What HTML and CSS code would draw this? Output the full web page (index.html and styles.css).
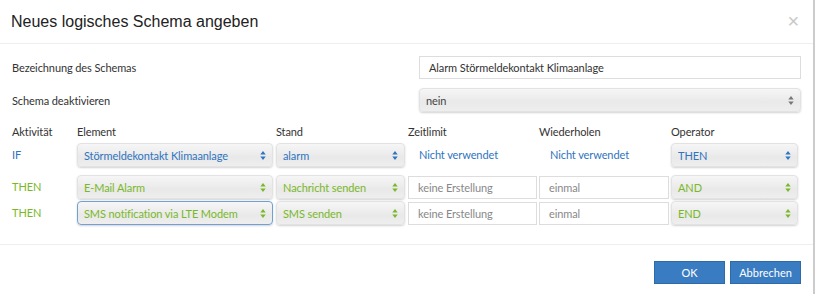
FILE: index.html
```html
<!DOCTYPE html>
<html lang="de">
<head>
    <meta charset="UTF-8">
    <title>Neues logisches Schema angeben</title>
    <link rel="stylesheet" href="styles.css">
</head>
<body>
    <div class="modal">
        <div class="modal-header">
            <h1>Neues logisches Schema angeben</h1>
            <span class="close">&times;</span>
        </div>

        <div class="modal-body">
            <div class="form-row">
                <label>Bezeichnung des Schemas</label>
                <div class="input wide">Alarm Störmeldekontakt Klimaanlage</div>
            </div>
            <div class="form-row">
                <label>Schema deaktivieren</label>
                <div class="select wide grey">nein<svg class="arrows" viewBox="0 0 6 10"><path d="M3 0L6 4H0z M3 10L0 6H6z"/></svg></div>
            </div>

            <div class="rules">
                <div class="head">Aktivität</div>
                <div class="head">Element</div>
                <div class="head">Stand</div>
                <div class="head">Zeitlimit</div>
                <div class="head">Wiederholen</div>
                <div class="head">Operator</div>

                <div class="act blue">IF</div>
                <div class="select blue">Störmeldekontakt Klimaanlage<svg class="arrows" viewBox="0 0 6 10"><path d="M3 0L6 4H0z M3 10L0 6H6z"/></svg></div>
                <div class="select blue">alarm<svg class="arrows" viewBox="0 0 6 10"><path d="M3 0L6 4H0z M3 10L0 6H6z"/></svg></div>
                <div class="plain blue">Nicht verwendet</div>
                <div class="plain blue">Nicht verwendet</div>
                <div class="select blue">THEN<svg class="arrows" viewBox="0 0 6 10"><path d="M3 0L6 4H0z M3 10L0 6H6z"/></svg></div>

                <div class="act green first">THEN</div>
                <div class="select green first">E-Mail Alarm<svg class="arrows" viewBox="0 0 6 10"><path d="M3 0L6 4H0z M3 10L0 6H6z"/></svg></div>
                <div class="select green first">Nachricht senden<svg class="arrows" viewBox="0 0 6 10"><path d="M3 0L6 4H0z M3 10L0 6H6z"/></svg></div>
                <div class="input first">keine Erstellung</div>
                <div class="input first">einmal</div>
                <div class="select green first">AND<svg class="arrows" viewBox="0 0 6 10"><path d="M3 0L6 4H0z M3 10L0 6H6z"/></svg></div>

                <div class="act green">THEN</div>
                <div class="select green focus">SMS notification via LTE Modem<svg class="arrows" viewBox="0 0 6 10"><path d="M3 0L6 4H0z M3 10L0 6H6z"/></svg></div>
                <div class="select green">SMS senden<svg class="arrows" viewBox="0 0 6 10"><path d="M3 0L6 4H0z M3 10L0 6H6z"/></svg></div>
                <div class="input">keine Erstellung</div>
                <div class="input">einmal</div>
                <div class="select green">END<svg class="arrows" viewBox="0 0 6 10"><path d="M3 0L6 4H0z M3 10L0 6H6z"/></svg></div>
            </div>
        </div>

        <div class="modal-footer">
            <button>OK</button>
            <button>Abbrechen</button>
        </div>
    </div>
</body>
</html>
```

FILE: styles.css
```css
body {
    margin: 0;
    background-color: #fff;
    font-family: Lato, "Open Sans", sans-serif;
    font-size: 11px;
    letter-spacing: -0.1px;
    color: #333;
}
.modal {
    width: 813px;
    height: 294px;
    border-right: 2px solid #ccc;
    background: #fff;
}
.modal-header {
    display: flex;
    justify-content: space-between;
    align-items: center;
    height: 43px;
    padding: 0 14px 0 11px;
    border-bottom: 1px solid #eee;
}
h1 {
    margin: 0;
    font-family: "Liberation Sans", Arial, sans-serif;
    font-size: 16px;
    font-weight: normal;
    letter-spacing: 0;
    color: #222;
}
.close {
    font-family: "Liberation Sans", Arial, sans-serif;
    font-size: 20px;
    color: #c8c8c8;
}
.modal-body {
    padding: 12px 12px 0 11px;
    height: 188px;
    border-bottom: 1px solid #eee;
}
.form-row {
    display: flex;
    justify-content: space-between;
    align-items: center;
    margin-bottom: 9px;
}
.form-row label {
    padding-left: 1px;
}
.wide {
    width: 382px;
}
.input {
    box-sizing: border-box;
    height: 23px;
    padding: 0 9px;
    display: flex;
    align-items: center;
    border: 1px solid #ddd;
    background: #fff;
    color: #888;
    white-space: nowrap;
}
.form-row .input {
    color: #333;
}
.select {
    box-sizing: border-box;
    height: 24px;
    padding: 0 6px;
    display: flex;
    align-items: center;
    justify-content: space-between;
    border: 1px solid #e2e2e2;
    border-radius: 4px;
    background: linear-gradient(#f6f6f6, #e9e9e9 60%, #eeeeee);
    box-shadow: 0 1px 2px rgba(0, 0, 0, 0.18);
    white-space: nowrap;
}
.arrows {
    width: 6px;
    height: 9px;
    flex: none;
    fill: currentColor;
}
.grey {
    color: #444;
}
.grey .arrows {
    fill: #777;
}
.blue {
    color: #2f74c0;
}
.green {
    color: #7ab829;
}
.focus {
    border-color: #6fa0d6;
}
.rules {
    display: grid;
    grid-template-columns: 66px 199px 132px 131px 132px 130px;
    align-items: center;
    margin-top: 6px;
}
.head {
    height: 22px;
    line-height: 22px;
}
.rules .select {
    margin-right: 3px;
}
.rules .input {
    margin-right: 2px;
}
.rules > div:nth-child(6n+1) {
    padding-left: 1px;
}
.plain {
    padding-left: 11px;
    height: 24px;
    line-height: 24px;
    white-space: nowrap;
}
.act {
    height: 24px;
    line-height: 24px;
}
.rules .first {
    margin-top: 8px;
    margin-bottom: 2px;
}
.modal-footer {
    display: flex;
    justify-content: flex-end;
    gap: 5px;
    padding: 16px 12px 0 0;
}
button {
    width: 71px;
    height: 23px;
    padding: 0;
    border: 1px solid #2f6aa8;
    background-color: #3a7cc2;
    color: #fff;
    font-family: Lato, "Open Sans", sans-serif;
    font-size: 11px;
    cursor: pointer;
}
```
